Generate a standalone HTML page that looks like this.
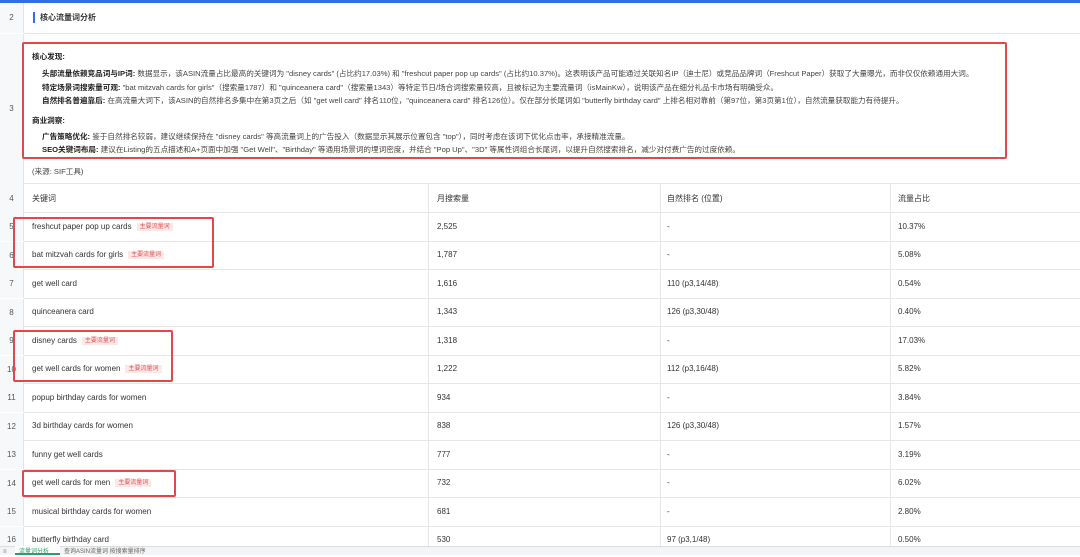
<!DOCTYPE html>
<html><head><meta charset="utf-8"><style>
*{margin:0;padding:0;box-sizing:border-box}
body{width:1080px;height:555px;overflow:hidden;background:#fff;font-family:"Liberation Sans","Noto Sans CJK SC",sans-serif;color:#333;position:relative}
.abs{position:absolute}
.rn{position:absolute;left:0;width:24px;background:#f7f8f9;text-align:center;font-size:8px;color:#555;border-right:1px solid #e4e4e4}
.hl{position:absolute;left:24px;right:0;height:1px;background:#e6e6e6}
.vl{position:absolute;width:1px;background:#e6e6e6;top:184px;bottom:9px}
.t{position:absolute;font-size:8px;color:#333;white-space:nowrap;line-height:10px}
.tag{display:inline-block;font-size:6px;line-height:8px;color:#e05555;background:#fde8e8;padding:0 3px;margin-left:5px;vertical-align:top;margin-top:1px}
.red{position:absolute;border:2px solid #e2474a;border-radius:2px}
.p{position:absolute;font-size:7.6px;white-space:nowrap;color:#444}
.p b{color:#222}
</style></head><body>
<div class="abs" style="left:0;top:0;width:1080px;height:3px;background:#2f6fe0"></div>
<div class="rn" style="top:3px;height:30px;line-height:30px">2</div>
<div class="abs" style="left:33px;top:12px;width:2px;height:11px;background:#2f6fe0"></div>
<div class="t" style="left:40px;top:13px;font-weight:bold;font-size:8px">核心流量词分析</div>
<div class="hl" style="top:33px"></div>
<div class="rn" style="top:34px;height:150px;line-height:150px">3</div>
<div class="red" style="left:22px;top:42px;width:985px;height:117px"></div>
<div class="p" style="left:32px;top:51px"><b>核心发现:</b></div>
<div class="p" style="left:42px;top:68px"><b>头部流量依赖竞品词与IP词:</b> 数据显示，该ASIN流量占比最高的关键词为 "disney cards" (占比约17.03%) 和 "freshcut paper pop up cards" (占比约10.37%)。这表明该产品可能通过关联知名IP（迪士尼）或竞品品牌词（Freshcut Paper）获取了大量曝光，而非仅仅依赖通用大词。</div>
<div class="p" style="left:42px;top:82px"><b>特定场景词搜索量可观:</b> "bat mitzvah cards for girls"（搜索量1787）和 "quinceanera card"（搜索量1343）等特定节日/场合词搜索量较高，且被标记为主要流量词（isMainKw），说明该产品在细分礼品卡市场有明确受众。</div>
<div class="p" style="left:42px;top:95px"><b>自然排名普遍靠后:</b> 在高流量大词下，该ASIN的自然排名多集中在第3页之后（如 "get well card" 排名110位，"quinceanera card" 排名126位）。仅在部分长尾词如 "butterfly birthday card" 上排名相对靠前（第97位，第3页第1位），自然流量获取能力有待提升。</div>
<div class="p" style="left:32px;top:115px"><b>商业洞察:</b></div>
<div class="p" style="left:42px;top:131px"><b>广告策略优化:</b> 鉴于自然排名较弱，建议继续保持在 "disney cards" 等高流量词上的广告投入（数据显示其展示位置包含 "top"），同时考虑在该词下优化点击率，承接精准流量。</div>
<div class="p" style="left:42px;top:144px"><b>SEO关键词布局:</b> 建议在Listing的五点描述和A+页面中加强 "Get Well"、"Birthday" 等通用场景词的埋词密度，并结合 "Pop Up"、"3D" 等属性词组合长尾词，以提升自然搜索排名，减少对付费广告的过度依赖。</div>
<div class="p" style="left:32px;top:166px">(来源: SIF工具)</div>
<div class="hl" style="top:183px"></div>
<div class="vl" style="left:428px"></div>
<div class="vl" style="left:660px"></div>
<div class="vl" style="left:890px"></div>

<div class="rn" style="top:184px;height:29px;line-height:29px">4</div>
<div class="t" style="left:32px;top:194px">关键词</div><div class="t" style="left:437px;top:194px">月搜索量</div><div class="t" style="left:667px;top:194px">自然排名 (位置)</div><div class="t" style="left:898px;top:194px">流量占比</div>
<div class="hl" style="top:212px"></div>

<div class="rn" style="top:213px;height:28px;line-height:28px">5</div>
<div class="t" style="left:32px;top:222px">freshcut paper pop up cards<span class="tag">主要流量词</span></div><div class="t" style="left:437px;top:222px">2,525</div><div class="t" style="left:667px;top:222px">-</div><div class="t" style="left:898px;top:222px">10.37%</div>
<div class="hl" style="top:241px"></div>
<div class="rn" style="top:242px;height:28px;line-height:28px">6</div>
<div class="t" style="left:32px;top:250px">bat mitzvah cards for girls<span class="tag">主要流量词</span></div><div class="t" style="left:437px;top:250px">1,787</div><div class="t" style="left:667px;top:250px">-</div><div class="t" style="left:898px;top:250px">5.08%</div>
<div class="hl" style="top:269px"></div>
<div class="rn" style="top:270px;height:28px;line-height:28px">7</div>
<div class="t" style="left:32px;top:279px">get well card</div><div class="t" style="left:437px;top:279px">1,616</div><div class="t" style="left:667px;top:279px">110 (p3,14/48)</div><div class="t" style="left:898px;top:279px">0.54%</div>
<div class="hl" style="top:298px"></div>
<div class="rn" style="top:299px;height:28px;line-height:28px">8</div>
<div class="t" style="left:32px;top:307px">quinceanera card</div><div class="t" style="left:437px;top:307px">1,343</div><div class="t" style="left:667px;top:307px">126 (p3,30/48)</div><div class="t" style="left:898px;top:307px">0.40%</div>
<div class="hl" style="top:326px"></div>
<div class="rn" style="top:327px;height:28px;line-height:28px">9</div>
<div class="t" style="left:32px;top:336px">disney cards<span class="tag">主要流量词</span></div><div class="t" style="left:437px;top:336px">1,318</div><div class="t" style="left:667px;top:336px">-</div><div class="t" style="left:898px;top:336px">17.03%</div>
<div class="hl" style="top:355px"></div>
<div class="rn" style="top:356px;height:28px;line-height:28px">10</div>
<div class="t" style="left:32px;top:364px">get well cards for women<span class="tag">主要流量词</span></div><div class="t" style="left:437px;top:364px">1,222</div><div class="t" style="left:667px;top:364px">112 (p3,16/48)</div><div class="t" style="left:898px;top:364px">5.82%</div>
<div class="hl" style="top:383px"></div>
<div class="rn" style="top:384px;height:28px;line-height:28px">11</div>
<div class="t" style="left:32px;top:393px">popup birthday cards for women</div><div class="t" style="left:437px;top:393px">934</div><div class="t" style="left:667px;top:393px">-</div><div class="t" style="left:898px;top:393px">3.84%</div>
<div class="hl" style="top:412px"></div>
<div class="rn" style="top:413px;height:28px;line-height:28px">12</div>
<div class="t" style="left:32px;top:421px">3d birthday cards for women</div><div class="t" style="left:437px;top:421px">838</div><div class="t" style="left:667px;top:421px">126 (p3,30/48)</div><div class="t" style="left:898px;top:421px">1.57%</div>
<div class="hl" style="top:440px"></div>
<div class="rn" style="top:441px;height:28px;line-height:28px">13</div>
<div class="t" style="left:32px;top:450px">funny get well cards</div><div class="t" style="left:437px;top:450px">777</div><div class="t" style="left:667px;top:450px">-</div><div class="t" style="left:898px;top:450px">3.19%</div>
<div class="hl" style="top:469px"></div>
<div class="rn" style="top:470px;height:28px;line-height:28px">14</div>
<div class="t" style="left:32px;top:478px">get well cards for men<span class="tag">主要流量词</span></div><div class="t" style="left:437px;top:478px">732</div><div class="t" style="left:667px;top:478px">-</div><div class="t" style="left:898px;top:478px">6.02%</div>
<div class="hl" style="top:497px"></div>
<div class="rn" style="top:498px;height:28px;line-height:28px">15</div>
<div class="t" style="left:32px;top:507px">musical birthday cards for women</div><div class="t" style="left:437px;top:507px">681</div><div class="t" style="left:667px;top:507px">-</div><div class="t" style="left:898px;top:507px">2.80%</div>
<div class="hl" style="top:526px"></div>
<div class="rn" style="top:527px;height:20px;line-height:26px">16</div>
<div class="t" style="left:32px;top:535px">butterfly birthday card</div><div class="t" style="left:437px;top:535px">530</div><div class="t" style="left:667px;top:535px">97 (p3,1/48)</div><div class="t" style="left:898px;top:535px">0.50%</div>

<div class="red" style="left:13px;top:217px;width:201px;height:51px"></div>
<div class="red" style="left:13px;top:330px;width:160px;height:52px"></div>
<div class="red" style="left:22px;top:470px;width:154px;height:27px"></div>

<div class="abs" style="left:0;top:546px;width:1080px;height:9px;background:#f3f4f5;border-top:1px solid #ddd"></div>
<div class="abs" style="left:15px;top:546px;width:45px;height:9px;background:#fff;border-bottom:2px solid #2a9d6a"></div>
<div class="t" style="left:3px;top:547px;font-size:6px;color:#777">≡</div>
<div class="t" style="left:19px;top:547px;font-size:6px;color:#2a9d6a">流量词分析</div>
<div class="t" style="left:64px;top:547px;font-size:6px;color:#666">查询ASIN流量词 按搜索量排序</div>
</body></html>
